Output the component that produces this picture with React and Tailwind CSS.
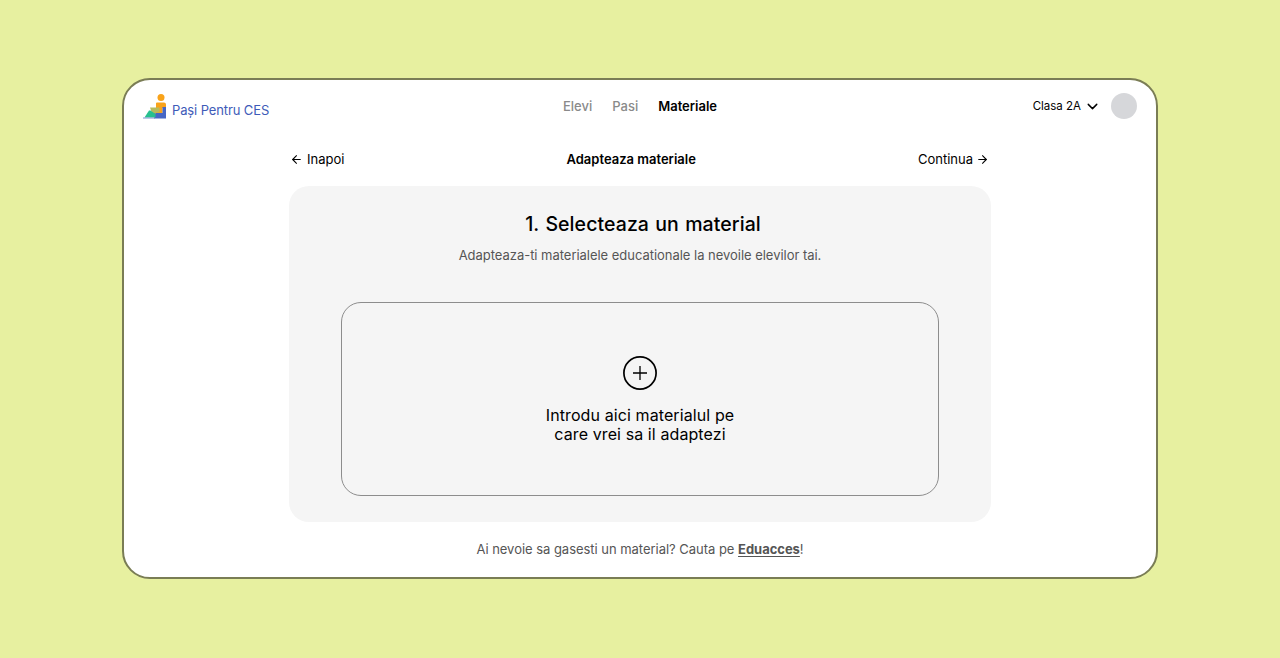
import React from "react";
import { ArrowLeft, ArrowRight, ChevronDown } from "lucide-react";

// Small stairs logo
const Logo = () => (
  <svg width="24" height="26" viewBox="0 0 24 26" className="shrink-0">
    <circle cx="18" cy="4.500" r="3.500" fill="#f9a31a" />
    <path d="M14 9.500h7a2 2 0 0 1 2 2V15h-3.500v6H13V10.500a1 1 0 0 1 1-1z" fill="#f9a31a" />
    <path d="M19.500 14H23v11.500H11V20h8.500z" fill="#4767c4" />
    <path d="M7 14.500h9.500v5H13v1H9z" fill="#b4bb5e" />
    <path d="M1.500 24.500 6 17.500h1.500l5 3.500v3.500z" fill="#27c08f" />
    <rect x="0" y="24.500" width="12" height="1" fill="#7f93cf" />
  </svg>
);

const App = () => {
  return (
    <div className="flex h-[658px] w-full items-start justify-center bg-[#e7f0a0] pt-[78px] font-['Inter',sans-serif]">
      <div className="flex h-[501px] w-[1036px] flex-col rounded-[28px] border-2 border-[#7a7d55] bg-white">
        {/* Top bar */}
        <header className="grid h-[52px] shrink-0 grid-cols-[1fr_auto_1fr] items-center px-[19px]">
          <div className="flex items-end gap-[5px]">
            <Logo />
            <span className="mb-[1px] text-[13px] leading-4 tracking-[-0.12px] text-[#3e5bb8]">Pași Pentru CES</span>
          </div>
          <nav className="flex items-center gap-[20px] pt-[1px] text-[13px] font-medium">
            <span className="text-[#8a8a8a]">Elevi</span>
            <span className="text-[#8a8a8a]">Pasi</span>
            <span className="font-semibold text-black">Materiale</span>
          </nav>
          <div className="flex items-center justify-end">
            <span className="mt-[2px] text-[11.5px] text-black">Clasa 2A</span>
            <ChevronDown className="ml-[3px] text-black" size={17} strokeWidth={2} />
            <div className="ml-[10px] h-[26px] w-[26px] rounded-full bg-[#d6d7da]" />
          </div>
        </header>

        {/* Main column */}
        <main className="mx-auto flex w-[702px] flex-col">
          <div className="flex h-[54px] items-center justify-between pt-[1px] pr-[2px] pl-[1px] text-[13px] text-black">
            <span className="flex items-center gap-[4px]">
              <ArrowLeft size={13} />
              Inapoi
            </span>
            <span className="font-semibold">Adapteaza materiale</span>
            <span className="flex items-center gap-[3px]">
              Continua
              <ArrowRight size={13} />
            </span>
          </div>

          <section className="flex h-[336px] flex-col items-center rounded-[20px] bg-[#f5f5f5] px-[52px] pt-[25px]">
            <h1 className="ml-[6px] text-[19.5px] leading-[26px] font-medium tracking-[0.08px] text-black [word-spacing:1px]">1. Selecteaza un material</h1>
            <p className="mt-[8px] text-[13px] leading-[20px] tracking-[-0.03px] text-[#555555]">
              Adapteaza-ti materialele educationale la nevoile elevilor tai.
            </p>
            <div className="mt-[37px] flex h-[194px] w-[598px] flex-col items-center rounded-[20px] border border-[#8d8d8d] pt-[53px]">
              <svg width="34" height="34" viewBox="0 0 34 34" fill="none" stroke="#000000" className="shrink-0">
                <circle cx="17" cy="17" r="16.100" strokeWidth="1.700" />
                <path d="M10 17h14M17 10v14" strokeWidth="1.300" />
              </svg>
              <p className="mt-[16px] text-center text-[16px] leading-[19px] tracking-[0.1px] text-black">
                Introdu aici materialul pe
                <br />
                care vrei sa il adaptezi
              </p>
            </div>
          </section>

          <p className="mt-[18px] text-center text-[13px] leading-[18px] tracking-[-0.03px] text-[#555555]">
            Ai nevoie sa gasesti un material? Cauta pe{" "}
            <span className="font-bold underline underline-offset-2">Eduacces</span>!
          </p>
        </main>
      </div>
    </div>
  );
};

export default App;
